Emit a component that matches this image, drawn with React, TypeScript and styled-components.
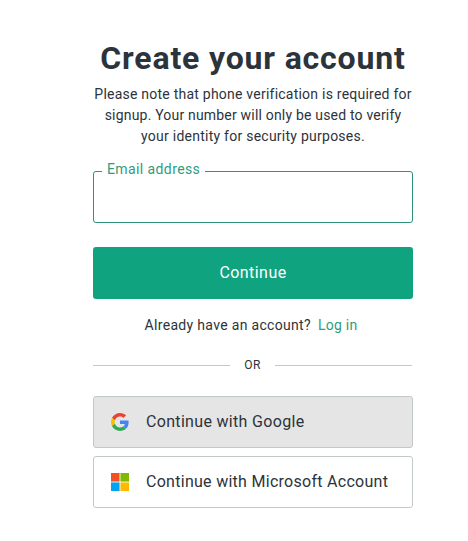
import React from "react";
import styled, { createGlobalStyle } from "styled-components";

const GlobalStyle = createGlobalStyle`
  *, *::before, *::after { box-sizing: border-box; }
  body {
    margin: 0;
    background: #fff;
    color: #2d333a;
    font-family: Roboto, "Liberation Sans", sans-serif;
    font-size: 14px;
  }
`;

const Page = styled.main`
  display: flex;
  flex-direction: column;
  width: 320px;
  margin-left: 93px;
  padding-top: 39px;
`;

const Title = styled.h1`
  margin: 0;
  font-size: 32px;
  line-height: 38px;
  font-weight: 700;
  text-align: center;
  white-space: nowrap;
`;

const Notice = styled.p`
  margin: 7px 0 0;
  line-height: 21px;
  text-align: center;
`;

const Line = styled.span<{ $spacing: string }>`
  display: block;
  white-space: nowrap;
  letter-spacing: ${(p) => p.$spacing};
`;

const Field = styled.label`
  position: relative;
  display: block;
  height: 52px;
  margin-top: 24px;
`;

const FieldInput = styled.input`
  display: block;
  width: 100%;
  height: 100%;
  padding: 0 16px;
  border: 1px solid #2c9279;
  border-radius: 3px;
  background: #fff;
  font: inherit;
  font-size: 16px;
  outline: none;
`;

const FieldLabel = styled.span`
  position: absolute;
  top: -12px;
  left: 9px;
  width: 103px;
  padding-left: 5px;
  background: #fff;
  color: #2f9c80;
  line-height: 20px;
  white-space: nowrap;
`;

const PrimaryButton = styled.button`
  height: 52px;
  margin-top: 24px;
  padding: 0 0 2px;
  border: 0;
  border-radius: 3px;
  background: #10a37f;
  color: #fff;
  font: inherit;
  font-size: 16px;
`;

const LoginRow = styled.p`
  display: flex;
  justify-content: center;
  gap: 7px;
  margin: 16px 0 0;
  padding-right: 4px;
  line-height: 20px;
  white-space: nowrap;
`;

const LoginLink = styled.a`
  color: #2f9c80;
  text-decoration: none;
`;

const Divider = styled.div`
  display: grid;
  grid-template-columns: 137px 45px 137px;
  align-items: center;
  height: 16px;
  margin-top: 22px;
  font-size: 12px;
  text-align: center;

  &::before, &::after {
    content: "";
    height: 1px;
    background: #c2c8d0;
  }
`;

const Providers = styled.div`
  display: grid;
  gap: 8px;
  margin-top: 23px;
`;

const ProviderButton = styled.button<{ $active?: boolean }>`
  display: flex;
  align-items: center;
  gap: 17px;
  height: 52px;
  padding: 0 0 0 17px;
  border: 1px solid #c2c8ca;
  border-radius: 3px;
  background: ${(p) => (p.$active ? "#e5e5e5" : "#fff")};
  color: #2d333a;
  font: inherit;
  font-size: 16px;
  white-space: nowrap;
`;

const Label = styled.span<{ $spacing: string }>`
  letter-spacing: ${(p) => p.$spacing};
`;

const ProviderLabel = styled(Label)`
  padding-bottom: 2px;
`;

const GoogleLogo = () => (
  <svg width="18" height="18" viewBox="0 0 48 48" aria-hidden="true">
    <path fill="#EA4335" d="M24 9.5c3.54 0 6.71 1.22 9.21 3.6l6.85-6.85C35.9 2.38 30.47 0 24 0 14.62 0 6.51 5.38 2.56 13.22l7.98 6.19C12.43 13.72 17.74 9.5 24 9.5z" />
    <path fill="#4285F4" d="M46.98 24.55c0-1.57-.15-3.09-.38-4.55H24v9.02h12.94c-.58 2.96-2.26 5.48-4.78 7.18l7.73 6c4.51-4.18 7.09-10.36 7.09-17.65z" />
    <path fill="#FBBC05" d="M10.53 28.59c-.48-1.45-.76-2.99-.76-4.59s.27-3.14.76-4.59l-7.98-6.19C.92 16.46 0 20.12 0 24c0 3.88.92 7.54 2.56 10.78l7.97-6.19z" />
    <path fill="#34A853" d="M24 48c6.48 0 11.93-2.13 15.89-5.81l-7.73-6c-2.15 1.45-4.92 2.3-8.16 2.3-6.26 0-11.57-4.22-13.47-9.91l-7.98 6.19C6.51 42.62 14.62 48 24 48z" />
  </svg>
);

const MicrosoftLogo = () => (
  <svg width="18" height="18" viewBox="0 0 18 18" aria-hidden="true">
    <path fill="#f25022" d="M0 0h8.57v8.57H0z" />
    <path fill="#00a4ef" d="M0 9.43h8.57V18H0z" />
    <path fill="#7fba00" d="M9.43 0H18v8.57H9.43z" />
    <path fill="#ffb900" d="M9.43 9.43H18V18H9.43z" />
  </svg>
);

export default function App() {
  return (
    <>
      <GlobalStyle />
      <Page>
        <Title><Label $spacing="0.83px">Create your account</Label></Title>
        <Notice>
          <Line $spacing="0.23px">Please note that phone verification is required for</Line>
          <Line $spacing="0.19px">signup. Your number will only be used to verify</Line>
          <Line $spacing="0.25px">your identity for security purposes.</Line>
        </Notice>
        <Field>
          <FieldInput type="email" aria-label="Email address" />
          <FieldLabel><Label $spacing="0.4px">Email address</Label></FieldLabel>
        </Field>
        <PrimaryButton type="button"><Label $spacing="0.45px">Continue</Label></PrimaryButton>
        <LoginRow>
          <Label $spacing="0.32px">Already have an account?</Label>
          <LoginLink href="#"><Label $spacing="0.25px">Log in</Label></LoginLink>
        </LoginRow>
        <Divider><Label $spacing="0.5px">OR</Label></Divider>
        <Providers>
          <ProviderButton type="button" $active>
            <GoogleLogo />
            <ProviderLabel $spacing="0.32px">Continue with Google</ProviderLabel>
          </ProviderButton>
          <ProviderButton type="button">
            <MicrosoftLogo />
            <ProviderLabel $spacing="0.28px">Continue with Microsoft Account</ProviderLabel>
          </ProviderButton>
        </Providers>
      </Page>
    </>
  );
}
